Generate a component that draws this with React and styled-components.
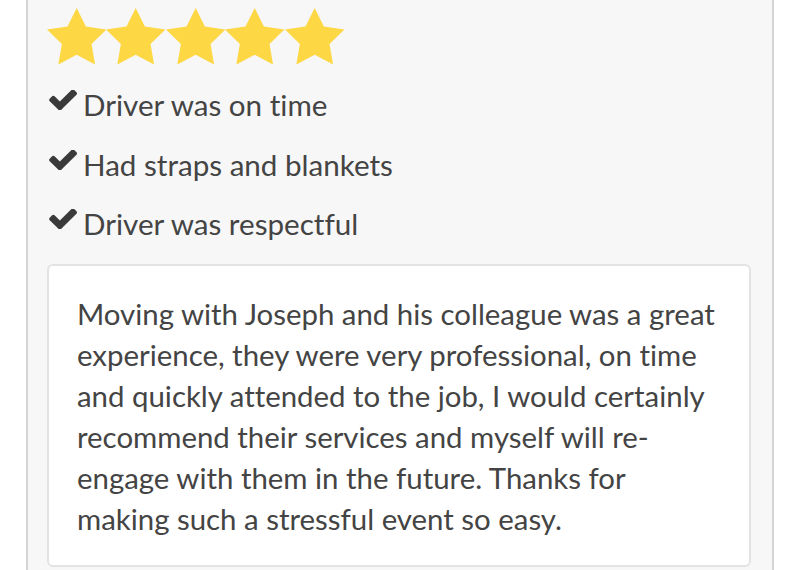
import React from 'react';
import styled, { createGlobalStyle } from 'styled-components';

const GlobalStyle = createGlobalStyle`
  body {
    margin: 0;
    background: #ffffff;
    font-family: Lato, "Open Sans", sans-serif;
    font-variant-ligatures: none;
  }
`;

const Page = styled.div`
  width: 799px;
  height: 570px;
  overflow: hidden;
`;

const Card = styled.div`
  margin-left: 26px;
  width: 748px;
  min-height: 600px;
  box-sizing: border-box;
  background: #f7f7f7;
  border-left: 2px solid #d4d4d4;
  border-right: 2px solid #d4d4d4;
  padding: 8px 21px 0 19px;
`;

const Stars = styled.div`
  display: flex;
  height: 57px;
`;

const Star = styled.svg`
  width: 59.4px;
  height: 57px;
  flex: none;
`;

const Checks = styled.ul`
  list-style: none;
  margin: 10px 0 0;
  padding: 0;
`;

const CheckItem = styled.li`
  display: flex;
  align-items: center;
  gap: 6px;
  height: 59.5px;
  font-size: 29.6px;
  color: #444;
`;

const CheckMark = styled.svg`
  width: 30px;
  height: 20px;
  flex: none;
  margin-bottom: 9px;
  fill: #3a3a3a;
`;

const ReviewBox = styled.div`
  margin-top: 10px;
  background: #fff;
  border: 2px solid #e3e3e3;
  border-radius: 6px;
  padding: 27px 28px 26px;
  font-size: 29.4px;
  line-height: 41px;
  color: #444;
`;

const items = ['Driver was on time', 'Had straps and blankets', 'Driver was respectful'];

const StarIcon = () => (
  <Star viewBox="2 2 20 19.2">
    <polygon
      fill="#fdd744"
      points="12,2 15.09,8.26 22,9.27 17,14.14 18.18,21.02 12,17.77 5.82,21.02 7,14.14 2,9.27 8.91,8.26"
    />
  </Star>
);

const Check = () => (
  <CheckMark viewBox="0 370 1671 1122" preserveAspectRatio="none">
    <path d="M1671 566q0 40-28 68l-724 724-136 136q-28 28-68 28t-68-28l-136-136-362-362q-28-28-28-68t28-68l136-136q28-28 68-28t68 28l294 295 656-657q28-28 68-28t68 28l136 136q28 28 28 68z" />
  </CheckMark>
);

export default function App() {
  return (
    <Page>
      <GlobalStyle />
      <Card>
        <Stars>
          {[0, 1, 2, 3, 4].map((i) => (
            <StarIcon key={i} />
          ))}
        </Stars>
        <Checks>
          {items.map((t) => (
            <CheckItem key={t}>
              <Check />
              {t}
            </CheckItem>
          ))}
        </Checks>
        <ReviewBox>
          Moving with Joseph and his colleague was a great experience, they were very professional, on time
          and quickly attended to the job, I would certainly recommend their services and myself will re-engage
          with them in the future. Thanks for making such a stressful event so easy.
        </ReviewBox>
      </Card>
    </Page>
  );
}
